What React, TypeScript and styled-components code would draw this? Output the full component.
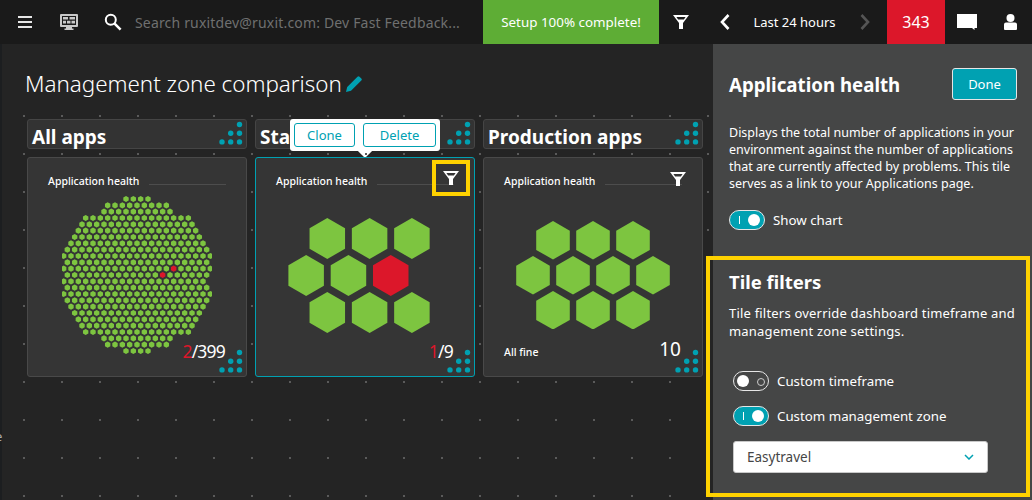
import styled, { createGlobalStyle } from 'styled-components';

const TEAL = '#00a1b2';
const GREEN = '#7dc540';
const RED = '#dc172a';
const YELLOW = '#ffd200';

// first dot offset and dot count of every row in the 399 app chart
const DOT_ROWS: [number, number][] = [
  [318, 4], [263, 9], [252, 10], [197, 15], [186, 16], [175, 17], [164, 18], [153, 19], [142, 20],
  [131, 21], [142, 20], [131, 21], [142, 20], [131, 20], [142, 20], [131, 21], [142, 20], [153, 19],
  [164, 18], [175, 17], [186, 16], [197, 15], [252, 10], [263, 9], [318, 4],
];

const RED_DOTS = ['11-15', '12-13'];

function hexPoints(cx: number, cy: number, w: number, h: number) {
  const dx = w / 2;
  const dy = h / 2;
  return [
    [cx, cy - dy],
    [cx + dx, cy - dy / 2],
    [cx + dx, cy + dy / 2],
    [cx, cy + dy],
    [cx - dx, cy + dy / 2],
    [cx - dx, cy - dy / 2],
  ]
    .map((p) => p.join(','))
    .join(' ');
}

function DotChart() {
  return (
    <svg width="150" height="160" viewBox="0 0 150 160">
      {DOT_ROWS.flatMap(([start, count], row) =>
        Array.from({ length: count }, (_, i) => (
          <polygon
            key={`${row}-${i}`}
            points={hexPoints((start + 22 * i) / 3 - 42, 4 + (row * 19) / 3, 5.4, 6.2)}
            fill={RED_DOTS.includes(`${row}-${i}`) ? RED : GREEN}
          />
        )),
      )}
    </svg>
  );
}

type HexProps = {
  rows: [number, number][]; // half step offset and hexagon count
  w: number;
  h: number;
  stepX: number;
  stepY: number;
  red?: string;
};

function HexChart({ rows, w, h, stepX, stepY, red }: HexProps) {
  const width = 160;
  const height = (rows.length - 1) * stepY + h;
  return (
    <svg width={width} height={height} viewBox={`0 0 ${width} ${height}`}>
      {rows.flatMap(([offset, count], row) =>
        Array.from({ length: count }, (_, i) => (
          <polygon
            key={`${row}-${i}`}
            points={hexPoints(stepX / 2 + (offset * stepX) / 2 + i * stepX, h / 2 + row * stepY, w, h)}
            fill={red === `${row}-${i}` ? RED : GREEN}
          />
        )),
      )}
    </svg>
  );
}

const FunnelIcon = () => (
  <svg width="16" height="14" viewBox="0 0 16 14">
    <path
      fill="#fff"
      fillRule="evenodd"
      d="M0 0h16l-6 8v6H6V8zM3.4 2l1.7 2.4h5.8L12.6 2z"
    />
  </svg>
);

const Corner = styled.svg`
  position: absolute;
  right: 3px;
  bottom: 3px;
`;

const ResizeDots = () => (
  <Corner width="24" height="24" viewBox="0 0 24 24">
    {[
      [20.5, 3.5],
      [11.7, 12.2],
      [20.5, 12.2],
      [3, 20.9],
      [11.7, 20.9],
      [20.5, 20.9],
    ].map(([cx, cy]) => (
      <circle key={`${cx}-${cy}`} cx={cx} cy={cy} r="2.7" fill={TEAL} />
    ))}
  </Corner>
);

const GlobalStyle = createGlobalStyle`
  * { box-sizing: border-box; }
  html, body { margin: 0; height: 100%; }
  body {
    background: #242424;
    color: #fff;
    font-family: "Noto Sans", "Open Sans", sans-serif;
    overflow: hidden;
  }
`;

const Page = styled.div`
  width: 1032px;
  height: 500px;
  display: flex;
  flex-direction: column;
`;

const TopBar = styled.header`
  height: 44px;
  flex: none;
  display: flex;
  background: #1a1a1a;
`;

const BarItem = styled.div<{ $w: number; $bg?: string; $size?: number }>`
  width: ${(p) => p.$w}px;
  flex: none;
  display: flex;
  align-items: center;
  justify-content: center;
  background: ${(p) => p.$bg ?? 'transparent'};
  font-size: ${(p) => p.$size ?? 13}px;
`;

const SearchBox = styled.div`
  flex: 1;
  display: flex;
  align-items: center;
  gap: 13px;
  padding-left: 16px;
  color: #6f7070;
  font-size: 14px;
  letter-spacing: 0.17px;
  white-space: nowrap;
`;

const Body = styled.div`
  flex: 1;
  display: flex;
  min-height: 0;
`;

const Rail = styled.div`
  position: relative;
  width: 2px;
  flex: none;
  background: #1c1e20;
`;

const ClippedLetter = styled.span`
  position: absolute;
  left: -5px;
  top: 383px;
  color: #aaa;
  font-size: 13px;
`;

const Main = styled.main`
  flex: 1;
  min-width: 0;
  display: flex;
  flex-direction: column;
`;

const Heading = styled.div`
  height: 71px;
  flex: none;
  display: flex;
  align-items: center;
  gap: 4px;
  padding: 8px 0 0 23px;
`;

const PageTitle = styled.h1`
  margin: 0;
  font-size: 22.4px;
  font-weight: 300;
  letter-spacing: -0.02px;
  white-space: nowrap;
`;

const Canvas = styled.div`
  flex: 1;
  display: grid;
  grid-template-columns: repeat(3, 220px);
  grid-template-rows: 30px 220px;
  column-gap: 8px;
  row-gap: 8px;
  align-content: start;
  padding: 4px 0 0 25px;
  background-image: radial-gradient(circle at 1px 1px, #5a5a5a 1.2px, transparent 1.2px);
  background-size: 38px 38px;
  background-position: 21px 0;
`;

const GroupHeader = styled.div`
  position: relative;
  display: flex;
  align-items: center;
  padding: 5px 0 0 4px;
  background: #333;
  border: 1px solid #454545;
  border-radius: 3px;
  font-size: 19px;
  font-weight: 700;
  white-space: nowrap;
`;

const Popover = styled.div`
  position: absolute;
  left: 34px;
  top: -1px;
  width: 150px;
  height: 32px;
  display: flex;
  align-items: center;
  gap: 8px;
  padding: 0 4px;
  background: #fff;
  border-radius: 3px;

  &::after {
    content: '';
    position: absolute;
    left: 70px;
    bottom: -5px;
    width: 10px;
    height: 10px;
    background: #fff;
    transform: rotate(45deg);
    z-index: -1;
  }
`;

const OutlineButton = styled.button<{ $w: number }>`
  width: ${(p) => p.$w}px;
  height: 24px;
  padding: 0;
  background: #fff;
  color: ${TEAL};
  border: 1px solid ${TEAL};
  border-radius: 3px;
  font: 400 13px "Noto Sans", sans-serif;
`;

const Tile = styled.section<{ $selected?: boolean }>`
  position: relative;
  background: #353535;
  border: 1px solid ${(p) => (p.$selected ? TEAL : '#494949')};
  border-radius: 3px;
`;

const TileTitle = styled.div`
  height: 30px;
  display: flex;
  align-items: flex-end;
  gap: 10px;
  padding: 0 20px;
  font-size: 10.5px;
  font-weight: 500;
  white-space: nowrap;

  &::after {
    content: '';
    flex: 1;
    height: 1px;
    margin-bottom: 3px;
    background: #4d4d4d;
  }
`;

const TileFilter = styled.div`
  position: absolute;
  top: 14px;
  right: 16px;
  line-height: 0;
`;

const Highlight = styled.div`
  position: absolute;
  top: 2px;
  right: 4px;
  width: 38px;
  height: 36px;
  display: flex;
  align-items: center;
  justify-content: center;
  border: 4px solid ${YELLOW};
`;

const Chart = styled.div`
  height: 174px;
  display: flex;
  align-items: center;
  justify-content: center;
`;

const Count = styled.div<{ $big?: boolean }>`
  position: absolute;
  right: 21px;
  bottom: ${(p) => (p.$big ? 16 : 14)}px;
  font-size: ${(p) => (p.$big ? 19 : 17.5)}px;
  letter-spacing: ${(p) => (p.$big ? 0 : -0.8)}px;
  line-height: 22px;
`;

const CountRed = styled.span`
  color: ${RED};
`;

const TileNote = styled.div`
  position: absolute;
  left: 20px;
  bottom: 17px;
  font-size: 10.5px;
  font-weight: 500;
`;

const Panel = styled.aside`
  width: 319px;
  flex: none;
  display: flex;
  flex-direction: column;
  background: #454646;
`;

const PanelTop = styled.div`
  height: 212px;
  flex: none;
  padding: 24px 15px 0 16px;
`;

const PanelHead = styled.div`
  display: flex;
  align-items: center;
  justify-content: space-between;
  height: 32px;
  margin-bottom: 24px;
`;

const PanelTitle = styled.h2`
  margin: 0;
  font-size: 18.7px;
  font-weight: 700;
  white-space: nowrap;
`;

const DoneButton = styled.button`
  width: 65px;
  height: 32px;
  padding: 0;
  background: ${TEAL};
  color: #fff;
  border: 1px solid #e6e6e6;
  border-radius: 3px;
  font: 400 13px "Noto Sans", sans-serif;
`;

const Copy = styled.p<{ $wide?: boolean }>`
  margin: 0;
  font-size: ${(p) => (p.$wide ? 13 : 12.5)}px;
  letter-spacing: ${(p) => (p.$wide ? 0.2 : 0)}px;
  line-height: ${(p) => (p.$wide ? 18 : 17)}px;
`;

const ToggleRow = styled.div<{ $top?: number }>`
  display: flex;
  align-items: center;
  gap: 8px;
  height: 20px;
  margin-top: ${(p) => p.$top ?? 0}px;
  font-size: 13.3px;
`;

const ToggleTrack = styled.div<{ $on?: boolean }>`
  position: relative;
  width: 36px;
  height: 20px;
  flex: none;
  border: 1px solid #e6e6e6;
  border-radius: 10px;
  background: ${(p) => (p.$on ? TEAL : 'transparent')};

  &::before {
    content: '';
    position: absolute;
    top: 3px;
    left: ${(p) => (p.$on ? '18px' : '3px')};
    width: 12px;
    height: 12px;
    border-radius: 50%;
    background: #fff;
  }

  &::after {
    content: '';
    position: absolute;
    top: ${(p) => (p.$on ? '5px' : '6px')};
    left: ${(p) => (p.$on ? '9px' : '23px')};
    width: ${(p) => (p.$on ? '1px' : '6px')};
    height: ${(p) => (p.$on ? '8px' : '6px')};
    background: ${(p) => (p.$on ? '#fff' : 'transparent')};
    border: ${(p) => (p.$on ? 'none' : '1px solid #ccc')};
    border-radius: ${(p) => (p.$on ? '0' : '50%')};
  }
`;

const FilterBox = styled.div`
  width: 324px;
  height: 241px;
  flex: none;
  margin-left: -7px;
  padding: 9px 0 0 19px;
  border: 4px solid ${YELLOW};
`;

const FilterTitle = styled.h3`
  margin: 0 0 10px;
  font-size: 18.5px;
  font-weight: 700;
`;

const ToggleStack = styled.div`
  display: flex;
  flex-direction: column;
  gap: 15px;
  margin: 31px 0 15px 4px;
`;

const SelectBox = styled.div`
  width: 255px;
  height: 32px;
  margin-left: 4px;
  display: flex;
  align-items: center;
  justify-content: space-between;
  padding: 0 13px;
  background: #fff;
  border: 1px solid #c8c8c8;
  border-radius: 3px;
  color: #454646;
  font-size: 13.5px;
  line-height: 28px;
`;

export default function App() {
  return (
    <Page>
      <GlobalStyle />
      <TopBar>
        <BarItem $w={50}>
          <svg width="14" height="12" viewBox="0 0 14 12">
            <path fill="#e6e6e6" d="M0 0h14v2H0zM0 5h14v2H0zM0 10h14v2H0z" />
          </svg>
        </BarItem>
        <BarItem $w={38}>
          <svg width="18" height="16" viewBox="0 0 18 16">
            <path
              fill="#c8c8c8"
              fillRule="evenodd"
              d="M1 0h16a1 1 0 0 1 1 1v11a1 1 0 0 1-1 1h-5v1.5h1.5V16h-9v-1.5H6V13H1a1 1 0 0 1-1-1V1a1 1 0 0 1 1-1zM2 2v9h14V2z"
            />
            <path fill="#c8c8c8" d="M3 3h5v2.5H3zM9.5 3H15v2.5H9.5zM3 6.8h3v2.6H3zM7 6.8h3.5v2.6H7zM11.5 6.8H15v2.6h-3.5z" />
          </svg>
        </BarItem>
        <SearchBox>
          <svg width="18" height="18" viewBox="0 0 18 18">
            <circle cx="6.8" cy="6.8" r="5" fill="none" stroke="#fff" strokeWidth="2" />
            <path d="M10.6 10.6l6 6" stroke="#fff" strokeWidth="2.6" />
          </svg>
          Search ruxitdev@ruxit.com: Dev Fast Feedback...
        </SearchBox>
        <BarItem $w={176} $bg="#5ead35" $size={13.4}>
          Setup 100% complete!
        </BarItem>
        <BarItem $w={44}>
          <FunnelIcon />
        </BarItem>
        <BarItem $w={44}>
          <svg width="10" height="16" viewBox="0 0 10 16">
            <path d="M8.5 1L2 8l6.5 7" fill="none" stroke="#fff" strokeWidth="2.6" />
          </svg>
        </BarItem>
        <BarItem $w={95}>Last 24 hours</BarItem>
        <BarItem $w={45}>
          <svg width="10" height="16" viewBox="0 0 10 16">
            <path d="M1.5 1L8 8l-6.5 7" fill="none" stroke="#555" strokeWidth="2.6" />
          </svg>
        </BarItem>
        <BarItem $w={58} $bg={RED} $size={16}>
          343
        </BarItem>
        <BarItem $w={43}>
          <svg width="20" height="16" viewBox="0 0 20 16">
            <path fill="#fff" d="M0 0h20v14h-2.5v2l-2.5-2H0z" />
          </svg>
        </BarItem>
        <BarItem $w={44}>
          <svg width="13" height="16" viewBox="0 0 13 16">
            <circle cx="6.5" cy="4" r="4" fill="#fff" />
            <path fill="#fff" d="M2 8.6h9a2 2 0 0 1 2 2V15a1 1 0 0 1-1 1H1a1 1 0 0 1-1-1v-4.4a2 2 0 0 1 2-2z" />
          </svg>
        </BarItem>
      </TopBar>
      <Body>
        <Rail>
          <ClippedLetter>e</ClippedLetter>
        </Rail>
        <Main>
          <Heading>
            <PageTitle>Management zone comparison</PageTitle>
            <svg width="16" height="16" viewBox="0 0 16 16">
              <path fill={TEAL} d="M0 16l1.2-5L11.5.7a1.4 1.4 0 0 1 2 0l1.8 1.8a1.4 1.4 0 0 1 0 2L5 14.8z" />
            </svg>
          </Heading>
          <Canvas>
            <GroupHeader>
              All apps
              <ResizeDots />
            </GroupHeader>
            <GroupHeader>
              Sta
              <ResizeDots />
              <Popover>
                <OutlineButton $w={61}>Clone</OutlineButton>
                <OutlineButton $w={73}>Delete</OutlineButton>
              </Popover>
            </GroupHeader>
            <GroupHeader>
              Production apps
              <ResizeDots />
            </GroupHeader>
            <Tile>
              <TileTitle>Application health</TileTitle>
              <Chart>
                <DotChart />
              </Chart>
              <Count>
                <CountRed>2</CountRed>/399
              </Count>
              <ResizeDots />
            </Tile>
            <Tile $selected>
              <TileTitle>Application health</TileTitle>
              <Highlight>
                <FunnelIcon />
              </Highlight>
              <Chart>
                <HexChart
                  rows={[[1, 3], [0, 3], [1, 3]]}
                  w={35.5}
                  h={41}
                  stepX={42.3}
                  stepY={37}
                  red="1-2"
                />
              </Chart>
              <Count>
                <CountRed>1</CountRed>/9
              </Count>
              <ResizeDots />
            </Tile>
            <Tile>
              <TileTitle>Application health</TileTitle>
              <TileFilter>
                <FunnelIcon />
              </TileFilter>
              <Chart>
                <HexChart
                  rows={[[1, 3], [0, 4], [1, 3]]}
                  w={33.6}
                  h={38.5}
                  stepX={40}
                  stepY={35}
                />
              </Chart>
              <TileNote>All fine</TileNote>
              <Count $big>10</Count>
              <ResizeDots />
            </Tile>
          </Canvas>
        </Main>
        <Panel>
          <PanelTop>
            <PanelHead>
              <PanelTitle>Application health</PanelTitle>
              <DoneButton>Done</DoneButton>
            </PanelHead>
            <Copy>
              Displays the total number of applications in your environment against the number of
              applications that are currently affected by problems. This tile serves as a link to
              your Applications page.
            </Copy>
            <ToggleRow $top={18}>
              <ToggleTrack $on />
              Show chart
            </ToggleRow>
          </PanelTop>
          <FilterBox>
            <FilterTitle>Tile filters</FilterTitle>
            <Copy $wide>
              Tile filters override dashboard timeframe and
              <br />
              management zone settings.
            </Copy>
            <ToggleStack>
              <ToggleRow>
                <ToggleTrack />
                Custom timeframe
              </ToggleRow>
              <ToggleRow>
                <ToggleTrack $on />
                Custom management zone
              </ToggleRow>
            </ToggleStack>
            <SelectBox>
              Easytravel
              <svg width="10" height="6" viewBox="0 0 10 6">
                <path d="M1 1l4 4 4-4" fill="none" stroke={TEAL} strokeWidth="1.5" />
              </svg>
            </SelectBox>
          </FilterBox>
        </Panel>
      </Body>
    </Page>
  );
}
